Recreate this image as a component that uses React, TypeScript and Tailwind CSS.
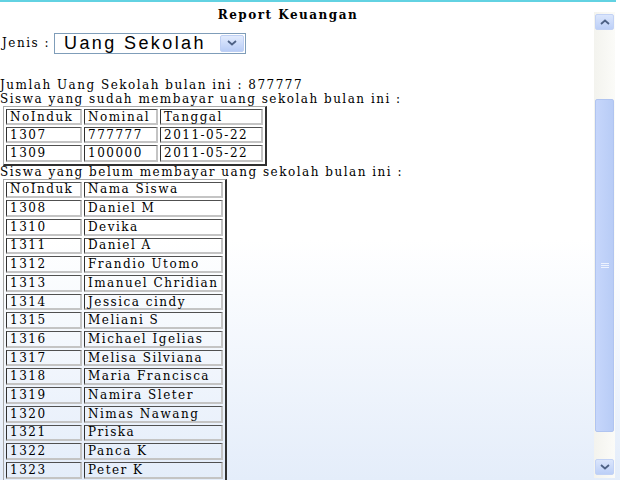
import React from "react";

const paid = [
  ["1307", "777777", "2011-05-22"],
  ["1309", "100000", "2011-05-22"],
];

const unpaid = [
  ["1308", "Daniel M"],
  ["1310", "Devika"],
  ["1311", "Daniel A"],
  ["1312", "Frandio Utomo"],
  ["1313", "Imanuel Chridian"],
  ["1314", "Jessica cindy"],
  ["1315", "Meliani S"],
  ["1316", "Michael Igelias"],
  ["1317", "Melisa Silviana"],
  ["1318", "Maria Francisca"],
  ["1319", "Namira Sleter"],
  ["1320", "Nimas Nawang"],
  ["1321", "Priska"],
  ["1322", "Panca K"],
  ["1323", "Peter K"],
];

const cellBase =
  "border-t border-l border-t-[#505050] border-l-[#303030] border-r-2 border-b-2 border-r-[#c4c4c4] border-b-[#c4c4c4] px-[3px] py-0 leading-[12px] text-left font-normal whitespace-nowrap";
const cell = `${cellBase} h-[16.7px]`;
const cell1 = `${cellBase} h-[16.2px]`;

function Chevron({ up }: { up?: boolean }) {
  return (
    <svg width="10" height="6" viewBox="0 0 10 6">
      <path
        d={up ? "M1 5 L5 1.5 L9 5" : "M1 1 L5 4.5 L9 1"}
        fill="none"
        stroke="#4d6185"
        strokeWidth="1.8"
      />
    </svg>
  );
}

const tableCls =
  "ml-[3px] border-separate border-spacing-[2px] border-t border-l border-t-[#a8a8a8] border-l-[#a8a8a8] border-r-2 border-b-2 border-r-[#303030] border-b-[#303030]";

export default function App() {
  return (
    <div
      className="w-[620px] h-[480px] overflow-hidden relative bg-gradient-to-b from-white from-50% to-[#e4edfa] text-black"
      style={{ fontFamily: '"DejaVu Serif", serif' }}
    >
      <div className="h-[2px] w-[616px] bg-[#62d2e2]" />
      <div className="flex">
        <div className="w-[594px] text-[12px] tracking-[1.5px]">
          <div className="h-[24px] pt-[5px] text-center font-bold leading-[16px] pr-[18px]">
            Report Keuangan
          </div>
          <div className="flex items-center h-[30px] pl-[2px] mt-[2px]">
            <span className="leading-[14px]">Jenis :</span>
            <div className="ml-[4px] w-[192px] h-[21px] border border-[#7f9db9] bg-white flex items-center">
              <span
                className="flex-1 pl-[9px] text-[18px] leading-[19px] tracking-[2.4px]"
                style={{ fontFamily: '"Liberation Sans", sans-serif' }}
              >
                Uang Sekolah
              </span>
              <div className="w-[24px] h-[17px] mr-[1px] rounded-[2px] bg-gradient-to-b from-[#e2ebfd] to-[#b9cdf6] border border-[#bfd0f4] flex items-center justify-center">
                <Chevron />
              </div>
            </div>
          </div>
          <div className="mt-[20px] leading-[14px]">Jumlah Uang Sekolah bulan ini : 877777</div>
          <div className="leading-[14px]">Siswa yang sudah membayar uang sekolah bulan ini :</div>
          <table className={tableCls}>
            <tbody>
              <tr>
                <th className={`${cell1} w-[76px]`}>NoInduk</th>
                <th className={`${cell1} w-[74px]`}>Nominal</th>
                <th className={`${cell1} w-[103px]`}>Tanggal</th>
              </tr>
              {paid.map((r) => (
                <tr key={r[0]}>
                  {r.map((c, i) => (
                    <td key={i} className={cell1}>
                      {c}
                    </td>
                  ))}
                </tr>
              ))}
            </tbody>
          </table>
          <div className="leading-[13px]">Siswa yang belum membayar uang sekolah bulan ini :</div>
          <table className={tableCls}>
            <tbody>
              <tr>
                <th className={`${cell} w-[76px]`}>NoInduk</th>
                <th className={`${cell} w-[139px]`}>Nama Siswa</th>
              </tr>
              {unpaid.map((r) => (
                <tr key={r[0]}>
                  <td className={cell}>{r[0]}</td>
                  <td className={cell}>{r[1]}</td>
                </tr>
              ))}
            </tbody>
          </table>
        </div>
        <div className="w-[21px] mt-[10px] h-[466px] bg-gradient-to-r from-[#f3f3ee] to-[#fbfbf8] flex flex-col">
          <div className="h-[16px] mt-[2px] mx-[1px] rounded-[2px] bg-gradient-to-b from-[#dbe6fc] to-[#bccff7] border border-[#c2d2f5] flex items-center justify-center">
            <Chevron up />
          </div>
          <div className="flex-1 relative">
            <div className="absolute left-[1px] right-[1px] top-[69px] h-[333px] rounded-[2px] bg-gradient-to-r from-[#c6d6fb] to-[#b8ccf6] border border-[#b0c4f0] flex items-center justify-center">
              <div className="flex flex-col gap-[1px]">
                <div className="w-[8px] h-[1px] bg-[#eef3fe]" />
                <div className="w-[8px] h-[1px] bg-[#eef3fe]" />
                <div className="w-[8px] h-[1px] bg-[#eef3fe]" />
              </div>
            </div>
          </div>
          <div className="h-[16px] mb-[3px] mx-[1px] rounded-[2px] bg-gradient-to-b from-[#dbe6fc] to-[#bccff7] border border-[#c2d2f5] flex items-center justify-center">
            <Chevron />
          </div>
        </div>
      </div>
    </div>
  );
}
